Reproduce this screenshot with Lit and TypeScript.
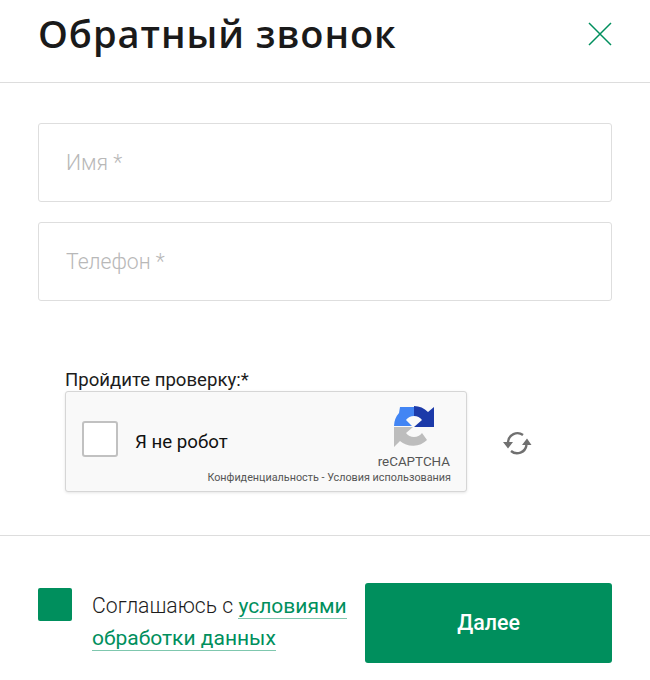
import { LitElement, html, css } from "lit";
import { customElement } from "lit/decorators.js";

@customElement("app-root")
export class AppRoot extends LitElement {
  static styles = css`
    :host { display: block; width: 650px; height: 680px; background: #fff; font-family: Roboto, "Liberation Sans", sans-serif; color: #1c1c1c; overflow: hidden; }
    .head { height: 83px; box-sizing: border-box; border-bottom: 1px solid #dddddd; padding: 0 38px; display: flex; align-items: center; justify-content: space-between; }
    h1 { margin: 0; font: 600 38px/1 "Open Sans", sans-serif; letter-spacing: 0.95px; color: #1a1a1a; position: relative; top: -8px; white-space: nowrap; }
    .close { width: 24px; height: 24px; display: block; position: relative; top: -7px; }
    .fields { padding: 40px 38px 0; display: flex; flex-direction: column; gap: 20px; }
    input { box-sizing: border-box; width: 574px; height: 79px; border: 1px solid #dedede; border-radius: 3px; padding: 0 27px; font: 300 21.2px Roboto, sans-serif; outline: none; background: #fff; }
    input::placeholder { color: #b8b8b8; opacity: 1; }
    .check { padding: 69px 0 0 65px; }
    .label { font-size: 18.6px; line-height: 20px; color: #1c1c1c; height: 21px; white-space: nowrap; }
    .row { display: flex; align-items: center; gap: 36px; }
    .captcha { box-sizing: border-box; width: 402px; height: 101px; background: #f9f9f9; border: 1px solid #d6d6d6; border-radius: 3px; box-shadow: 0 1px 3px rgba(0,0,0,.1); display: grid; grid-template-columns: 1fr auto; padding: 0; }
    .left { display: flex; align-items: center; gap: 17px; padding: 0 0 5px 16px; }
    .box { width: 36px; height: 36px; box-sizing: border-box; background: #fff; border: 2px solid #c1c1c1; border-radius: 3px; }
    .robot { font-size: 18.7px; font-weight: 400; color: #111; padding-top: 6px; white-space: nowrap; }
    .right { display: flex; flex-direction: column; align-items: flex-end; padding: 14px 15px 0 0; }
    .logo { width: 40px; height: 41px; display: block; margin-right: 17px; }
    .rc { font-size: 13.4px; line-height: 14px; color: #555; margin: 8px 1px 0 0; }
    .terms { font-size: 10.8px; line-height: 12px; color: #555; white-space: nowrap; margin-top: 3px; position: absolute; right: 0; }
    .rc-bottom { position: relative; height: 15px; width: 100%; }
    .refresh { width: 30px; height: 28px; display: block; margin-top: 1px; }
    .foot { margin-top: 43px; border-top: 1px solid #dddddd; padding: 47px 38px 0; display: flex; justify-content: space-between; }
    .agree { display: flex; gap: 20px; padding-top: 5px; }
    .tick { width: 34px; height: 33px; background: #008f5d; border-radius: 2px; flex: none; }
    .text { font-size: 21.2px; font-weight: 300; line-height: 32px; width: 262px; color: #1c1c1c; margin-top: 2px; }
    a { color: #008f5d; font-size: 21px; text-decoration: none; border-bottom: 1px solid #7fc7ae; font-weight: 400; }
    button { width: 247px; height: 80px; background: #008f5d; border: 0; border-radius: 3px; color: #fff; font: 500 21.4px Roboto, sans-serif; padding: 0 0 1px; }
  `;

  render() {
    return html`
      <div class="head">
        <h1>Обратный звонок</h1>
        <svg class="close" viewBox="0 0 24 24" fill="none" stroke="#008f5d" stroke-width="1.5"><path d="M1 1 23 23M23 1 1 23"/></svg>
      </div>
      <div class="fields">
        <input placeholder="Имя *" />
        <input placeholder="Телефон *" />
      </div>
      <div class="check">
        <div class="label">Пройдите проверку:*</div>
        <div class="row">
          <div class="captcha">
            <div class="left"><div class="box"></div><div class="robot">Я не робот</div></div>
            <div class="right">
              <svg class="logo" viewBox="0 0 40 41">
                <path fill="#1c3aa9" d="M20 0A20 20 0 0 1 34 6L40 1V21H20L28 14A10 10 0 0 0 20 10Z"/>
                <path fill="#4285f4" d="M0 20A20 20 0 0 1 5 7L6 1H20V10A10 10 0 0 0 12 14L18 20H0Z"/>
                <path fill="#bdbdbd" d="M0 21H19L12 27A10 10 0 0 0 28 27L33 34A20 20 0 0 1 6 35L0 41Z"/>
              </svg>
              <div class="rc">reCAPTCHA</div>
              <div class="rc-bottom"><div class="terms">Конфиденциальность - Условия использования</div></div>
            </div>
          </div>
          <svg class="refresh" viewBox="0 0 30 28" fill="none" stroke="#707070" stroke-width="2.4">
            <path d="M5 14A9.5 9.5 0 0 1 20 7"/>
            <path d="M23.5 17A9.5 9.5 0 0 1 8 23"/>
            <path fill="#707070" stroke="none" d="M0 14H10L5 20.5ZM19 17H28.5L24 10.5Z"/>
          </svg>
        </div>
      </div>
      <div class="foot">
        <div class="agree">
          <div class="tick"></div>
          <div class="text">Соглашаюсь с <a href="#">условиями обработки данных</a></div>
        </div>
        <button>Далее</button>
      </div>
    `;
  }
}
